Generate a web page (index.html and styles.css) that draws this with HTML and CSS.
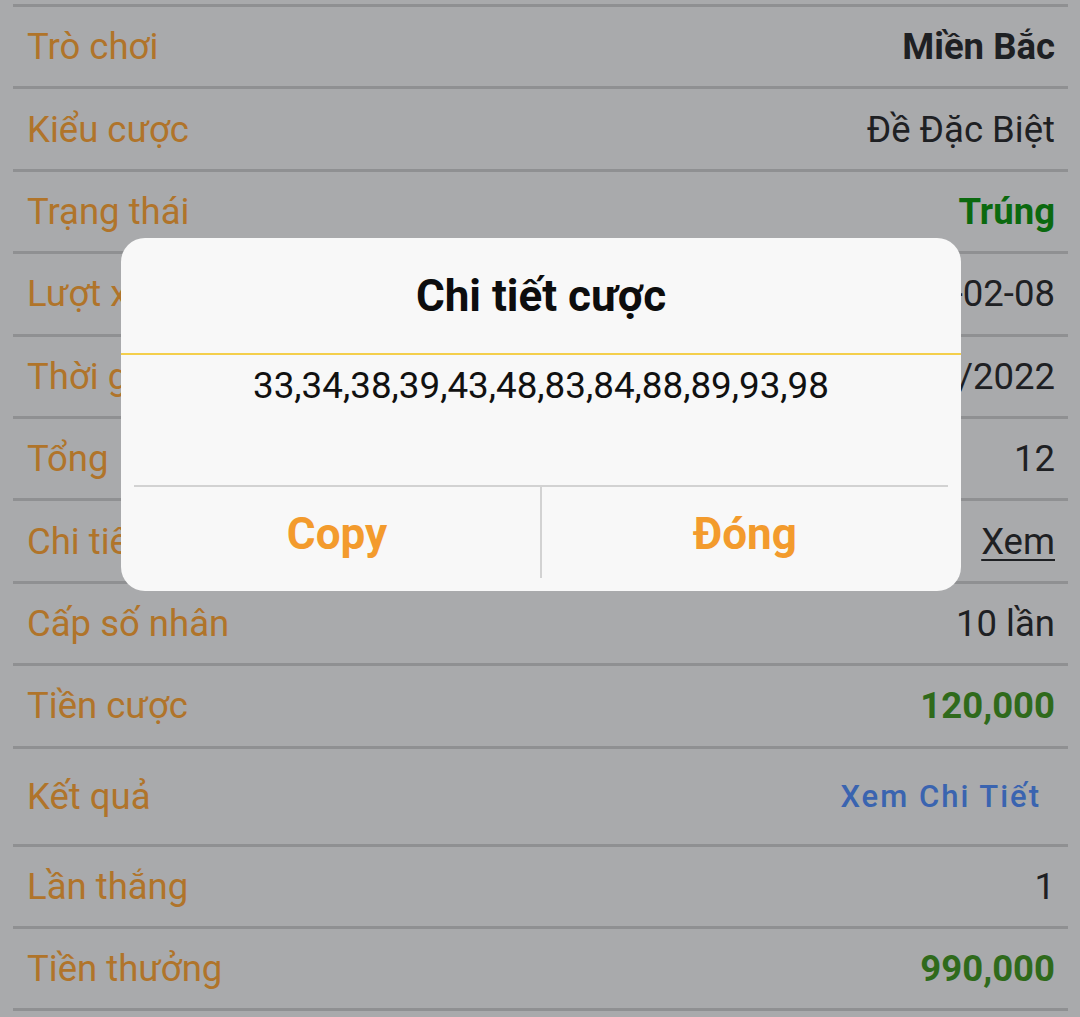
FILE: index.html
```html
<!DOCTYPE html>
<html lang="vi">
<head>
<meta charset="utf-8">
<title>Chi tiết cược</title>
<link rel="stylesheet" href="styles.css">
</head>
<body>
<div class="list">
  <div class="row"><span class="label">Trò chơi</span><span class="value bold">Miền Bắc</span></div>
  <div class="row"><span class="label">Kiểu cược</span><span class="value">Đề Đặc Biệt</span></div>
  <div class="row"><span class="label">Trạng thái</span><span class="value bold win">Trúng</span></div>
  <div class="row"><span class="label">Lượt xổ</span><span class="value">2022-02-08</span></div>
  <div class="row"><span class="label">Thời gian</span><span class="value">08/02/2022</span></div>
  <div class="row"><span class="label">Tổng</span><span class="value">12</span></div>
  <div class="row"><span class="label">Chi tiết</span><span class="value link">Xem</span></div>
  <div class="row"><span class="label">Cấp số nhân</span><span class="value">10 lần</span></div>
  <div class="row"><span class="label">Tiền cược</span><span class="value bold money">120,000</span></div>
  <div class="row tall"><span class="label">Kết quả</span><span class="value detail">Xem Chi Tiết</span></div>
  <div class="row"><span class="label">Lần thắng</span><span class="value">1</span></div>
  <div class="row"><span class="label">Tiền thưởng</span><span class="value bold money">990,000</span></div>
</div>

<div class="modal">
  <div class="modal-title">Chi tiết cược</div>
  <div class="modal-body">33,34,38,39,43,48,83,84,88,89,93,98</div>
  <div class="modal-actions">
    <div class="btn">Copy</div>
    <div class="btn btn-sep">Đóng</div>
  </div>
</div>
</body>
</html>
```
FILE: styles.css
```css
html, body {
  margin: 0;
  padding: 0;
}
body {
  width: 1080px;
  height: 1017px;
  overflow: hidden;
  background: #a9aaac;
  font-family: Roboto, "Noto Sans", sans-serif;
  position: relative;
}
.list {
  margin: 4px 12px 0 13px;
  border-top: 3px solid #8f9092;
}
.row {
  display: flex;
  justify-content: space-between;
  align-items: center;
  height: 79.4px;
  border-bottom: 3px solid #8f9092;
  padding: 0 13px 0 14px;
}
.row.tall {
  height: 95px;
}
.label {
  font-size: 36.5px;
  color: #b0742a;
}
.value {
  font-size: 36.5px;
  color: #1e2023;
}
.value.bold {
  font-weight: 700;
}
.value.win {
  color: #0b690f;
}
.value.money {
  color: #2f6a1b;
}
.value.link {
  text-decoration: underline;
  text-underline-offset: 5px;
  text-decoration-thickness: 2px;
}
.value.detail {
  font-size: 31px;
  font-weight: 500;
  letter-spacing: 2px;
  color: #3a64b0;
  margin-right: 14px;
}
.modal {
  position: absolute;
  left: 121px;
  top: 238px;
  width: 840px;
  height: 353px;
  background: #f8f8f8;
  border-radius: 24px;
  display: flex;
  flex-direction: column;
}
.modal-title {
  display: flex;
  align-items: center;
  justify-content: center;
  font-size: 44px;
  font-weight: 700;
  color: #0d0d0d;
  border-bottom: 2px solid #f4cf4c;
  box-sizing: border-box;
  height: 117px;
}
.modal-body {
  height: 132px;
  box-sizing: border-box;
  margin: 0 13px;
  padding-top: 9px;
  text-align: center;
  font-size: 36.8px;
  color: #111;
  border-bottom: 2px solid #d2d2d2;
}
.modal-actions {
  flex: 1;
  display: flex;
  padding: 0 13px 13px;
}
.btn {
  flex: 1;
  display: flex;
  align-items: center;
  justify-content: center;
  font-size: 44px;
  font-weight: 700;
  color: #f39b2d;
  padding-top: 3px;
}
.btn-sep {
  border-left: 2px solid #d2d2d2;
}
```
